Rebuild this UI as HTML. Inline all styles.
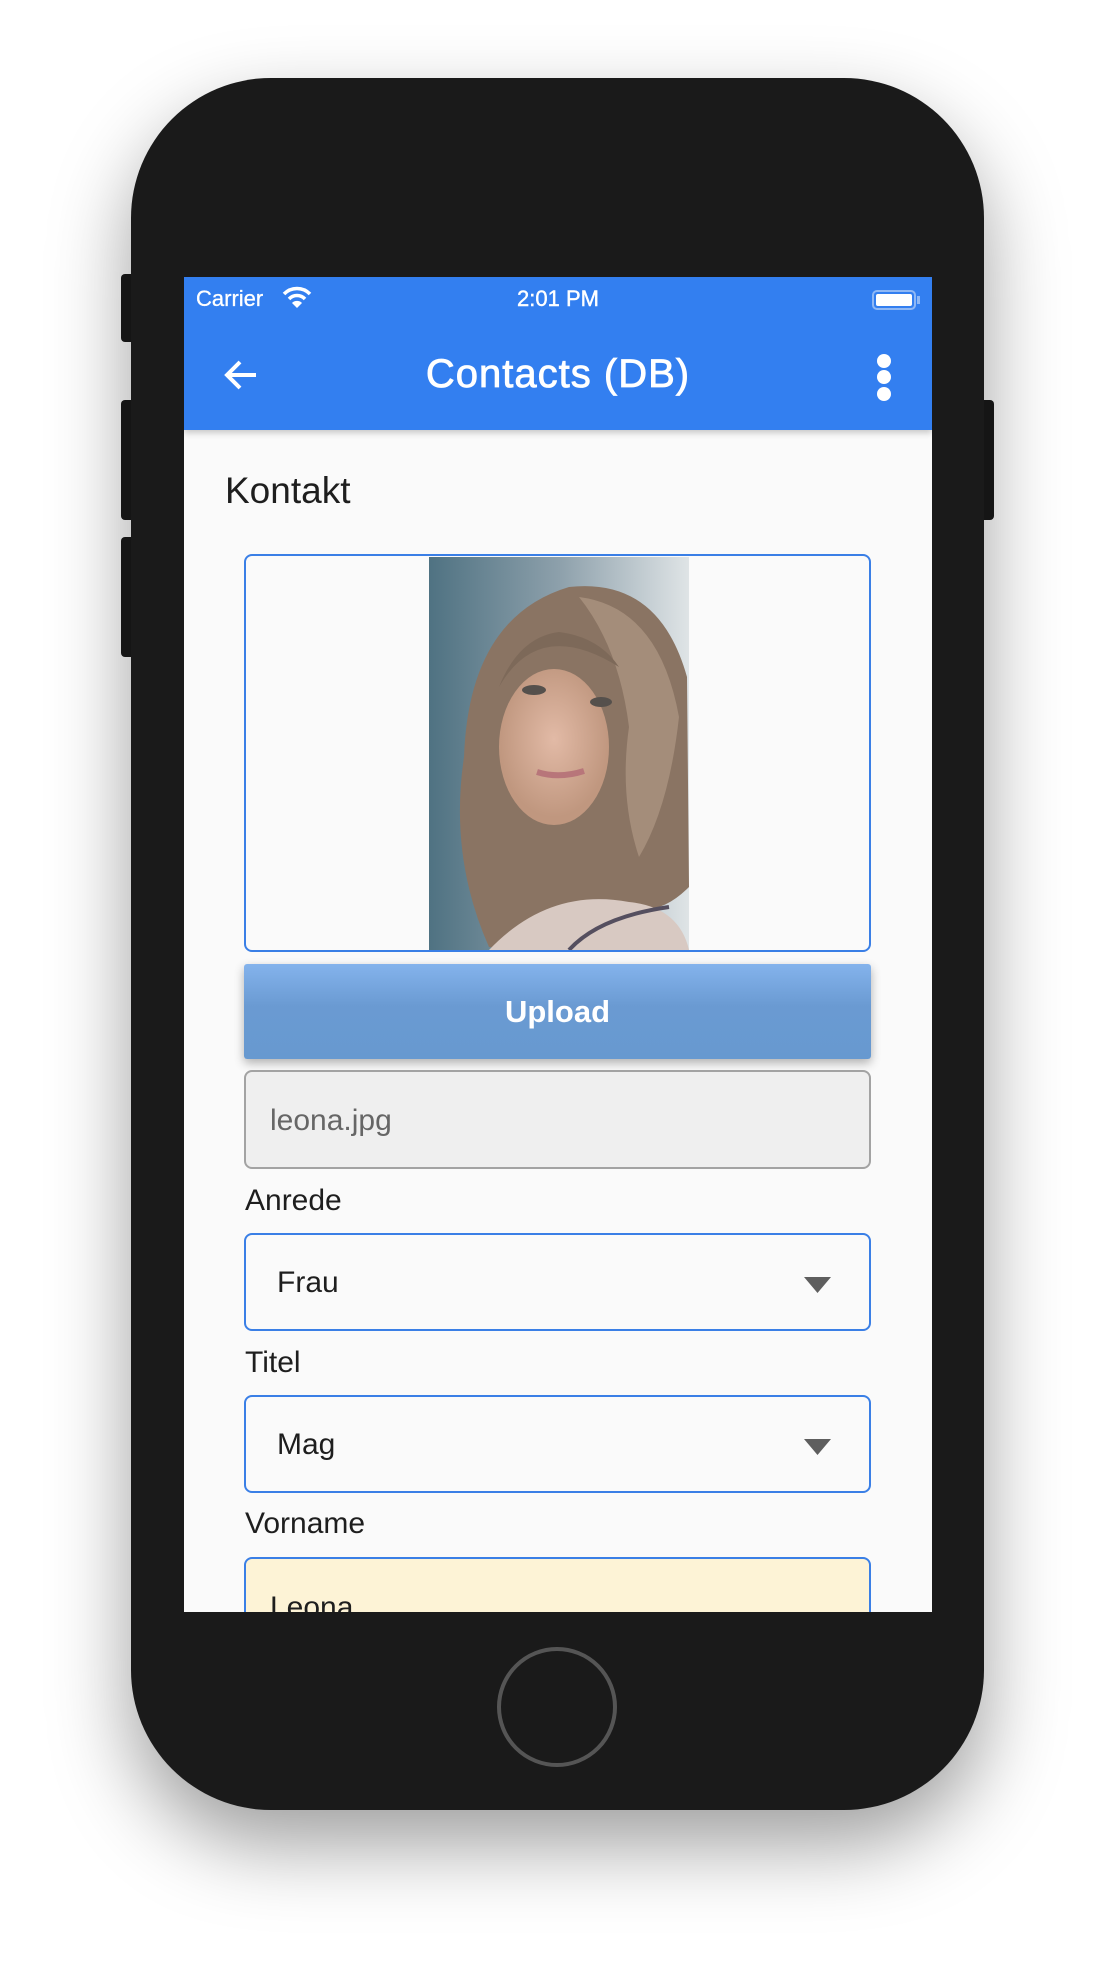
<!DOCTYPE html>
<html><head><meta charset="utf-8">
<style>
*{margin:0;padding:0;box-sizing:border-box}
body{width:1118px;height:1962px;background:#fff;position:relative;overflow:hidden;font-family:"Liberation Sans",sans-serif}
.abs{position:absolute}
.phone{left:131px;top:78px;width:853px;height:1732px;background:#1a1a1a;border-radius:140px;box-shadow:0 35px 80px rgba(0,0,0,0.38)}
.btn{background:#1a1a1a;border-radius:4px}
.lbl{font-size:30px;color:#1e1e1e;left:245px}
.box{left:244px;width:627px;border:2px solid #3a7fe6;border-radius:8px}
</style></head><body>
<div class="abs btn" style="left:121px;top:274px;width:14px;height:68px"></div>
<div class="abs btn" style="left:121px;top:400px;width:14px;height:120px"></div>
<div class="abs btn" style="left:121px;top:537px;width:14px;height:120px"></div>
<div class="abs btn" style="left:980px;top:400px;width:14px;height:120px"></div>
<div class="abs phone"></div>
<div class="abs" style="left:184px;top:277px;width:748px;height:1335px;background:#fafafa;overflow:hidden">
  <div class="abs" style="left:0;top:0;width:748px;height:153px;background:#337ff0;box-shadow:0 3px 6px rgba(0,0,0,0.2)"></div>
  <div class="abs" style="left:12px;top:9px;color:#fff;font-size:22px;-webkit-text-stroke:0.3px #fff">Carrier</div>
  <svg class="abs" style="left:98px;top:9px" width="30" height="24" viewBox="0 0 30 24"><path d="M2 8 A18 18 0 0 1 28 8" stroke="#fff" stroke-width="3.5" fill="none"/><path d="M7 13 A11 11 0 0 1 23 13" stroke="#fff" stroke-width="3.5" fill="none"/><path d="M15 22 L10 17 A7 7 0 0 1 20 17 Z" fill="#fff"/></svg>
  <div class="abs" style="left:0;width:748px;top:9px;text-align:center;color:#fff;font-size:22px;-webkit-text-stroke:0.4px #fff">2:01 PM</div>
  <div class="abs" style="left:688px;top:13px;width:44px;height:20px;border:2px solid #8fb8f5;border-radius:5px;padding:2px"><div style="width:100%;height:100%;background:#fff;border-radius:2px"></div></div>
  <div class="abs" style="left:733px;top:19px;width:3px;height:8px;background:#8fb8f5"></div>
  <svg class="abs" style="left:38px;top:80px" width="38" height="36" viewBox="0 0 38 36"><path d="M34 18 H6 M18 5 L5 18 L18 31" stroke="#fff" stroke-width="4" fill="none"/></svg>
  <div class="abs" style="left:0;width:748px;top:75px;text-align:center;color:#fff;font-size:40px;letter-spacing:1px;-webkit-text-stroke:0.8px #fff">Contacts (DB)</div>
  <div class="abs" style="left:693px;top:77px;width:14px;height:14px;border-radius:50%;background:#fff"></div>
  <div class="abs" style="left:693px;top:93px;width:14px;height:14px;border-radius:50%;background:#fff"></div>
  <div class="abs" style="left:693px;top:110px;width:14px;height:14px;border-radius:50%;background:#fff"></div>
  <div class="abs" style="left:41px;top:193px;font-size:37px;color:#1e1e1e">Kontakt</div>
</div>
<div class="abs box" style="top:554px;height:398px;background:#fafafa;overflow:hidden">
  <svg class="abs" style="left:183px;top:1px" width="260" height="393" viewBox="0 0 260 393">
    <defs><linearGradient id="bg" x1="0" x2="1"><stop offset="0" stop-color="#4f7282"/><stop offset="0.5" stop-color="#8da0ab"/><stop offset="1" stop-color="#dfe4e6"/></linearGradient>
    <radialGradient id="fc" cx="0.5" cy="0.45"><stop offset="0" stop-color="#e2baa6"/><stop offset="1" stop-color="#c0977f"/></radialGradient></defs>
    <rect width="260" height="393" fill="url(#bg)"/>
    <path d="M60 390 Q20 300 35 200 Q40 60 140 30 Q230 20 258 120 L260 330 Q230 360 200 350 Q150 380 120 360 Q90 395 60 390Z" fill="#8a7463"/>
    <path d="M150 40 Q230 50 250 160 Q240 250 210 300 Q190 240 200 170 Q190 90 150 40Z" fill="#a48d7a"/>
    <ellipse cx="125" cy="190" rx="55" ry="78" fill="url(#fc)"/>
    <path d="M70 130 Q110 60 190 110 Q170 80 130 75 Q90 80 70 130Z" fill="#7d6959"/>
    <ellipse cx="105" cy="133" rx="12" ry="5" fill="#55504c"/><ellipse cx="172" cy="145" rx="11" ry="5" fill="#55504c"/>
    <path d="M108 215 Q130 222 155 214" stroke="#b8767a" stroke-width="6" fill="none"/>
    <path d="M60 393 Q120 330 200 345 Q250 350 260 393Z" fill="#d8c9c2"/>
    <path d="M140 393 Q170 360 240 350" stroke="#554f5f" stroke-width="4" fill="none"/>
  </svg>
</div>
<div class="abs" style="left:244px;top:964px;width:627px;height:95px;border-radius:3px;background:linear-gradient(#84b3ec,#6a9ad2 45%,#6799d0);box-shadow:0 4px 10px rgba(0,0,0,0.3);color:#fff;font-size:31px;font-weight:bold;text-align:center;line-height:95px">Upload</div>
<div class="abs box" style="top:1070px;height:99px;background:#efefef;border-color:#a3a3a3;color:#666;font-size:30px;padding-left:24px;line-height:97px">leona.jpg</div>
<div class="abs lbl" style="top:1184px">Anrede</div>
<div class="abs box" style="top:1233px;height:98px;background:#fafafa;font-size:30px;color:#1e1e1e;padding-left:31px;line-height:96px">Frau</div>
<svg class="abs" style="left:804px;top:1277px" width="27" height="16"><path d="M0 0 H27 L13.5 16Z" fill="#5e5e5e"/></svg>
<div class="abs lbl" style="top:1346px">Titel</div>
<div class="abs box" style="top:1395px;height:98px;background:#fafafa;font-size:30px;color:#1e1e1e;padding-left:31px;line-height:96px">Mag</div>
<svg class="abs" style="left:804px;top:1439px" width="27" height="16"><path d="M0 0 H27 L13.5 16Z" fill="#5e5e5e"/></svg>
<div class="abs lbl" style="top:1507px">Vorname</div>
<div class="abs" style="left:184px;top:1557px;width:748px;height:55px;overflow:hidden">
  <div class="abs box" style="left:60px;top:0;height:98px;background:#fdf3d6;font-size:30px;color:#1e1e1e;padding-left:24px;line-height:97px">Leona</div>
</div>
<div class="abs" style="left:497px;top:1647px;width:120px;height:120px;border:4px solid #555;border-radius:50%"></div>
</body></html>
